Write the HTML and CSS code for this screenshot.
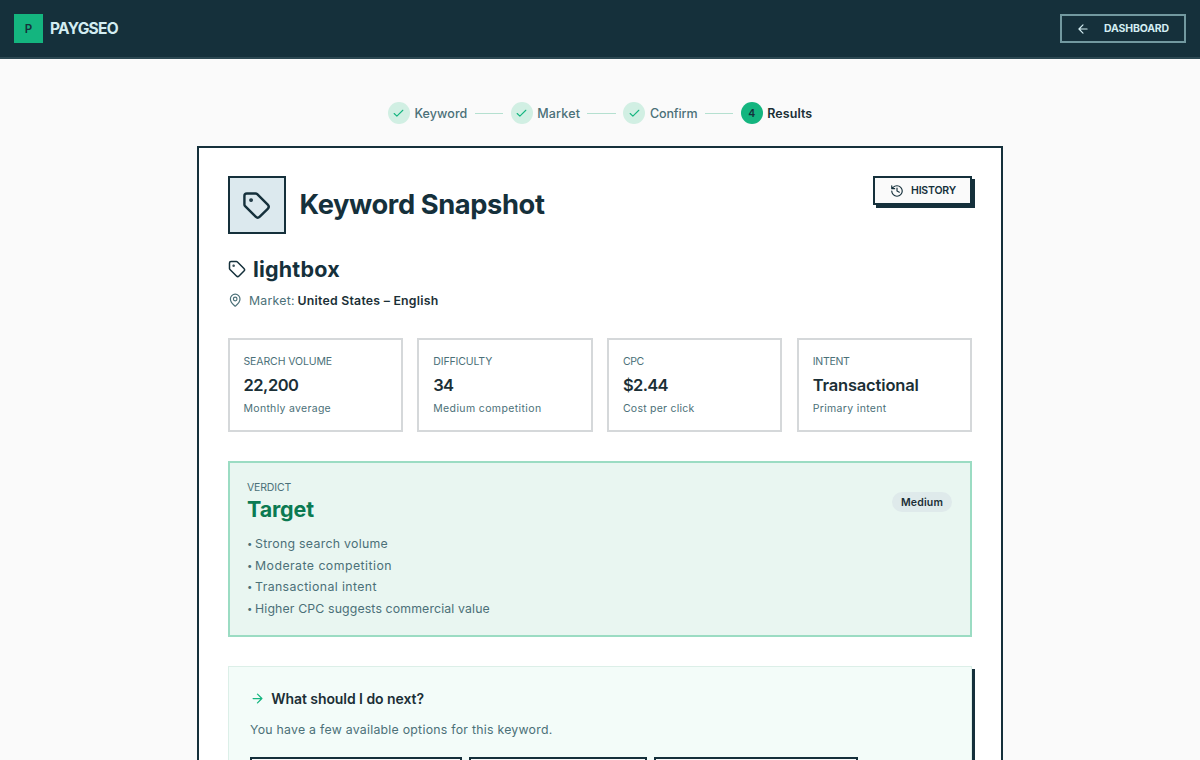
FILE: index.html
```html
<!DOCTYPE html>
<html lang="en">
<head>
<meta charset="utf-8">
<title>Keyword Snapshot</title>
<link rel="stylesheet" href="styles.css">
</head>
<body>
<header class="topbar">
  <div class="brand"><span class="brand-mark">P</span><span class="brand-name">PAYGSEO</span></div>
  <a class="dash-btn"><svg class="ic-arrow" viewBox="0 0 24 24"><path d="m12 19-7-7 7-7M19 12H5"/></svg><span class="dash-label">DASHBOARD</span></a>
</header>
<main class="page">
  <nav class="steps">
    <span class="dot"><svg viewBox="0 0 24 24"><path d="M20 6 9 17l-5-5"/></svg></span><span class="step s1">Keyword</span><i class="line"></i>
    <span class="dot"><svg viewBox="0 0 24 24"><path d="M20 6 9 17l-5-5"/></svg></span><span class="step s2">Market</span><i class="line"></i>
    <span class="dot"><svg viewBox="0 0 24 24"><path d="M20 6 9 17l-5-5"/></svg></span><span class="step s3">Confirm</span><i class="line"></i>
    <span class="dot on">4</span><span class="step s4 active">Results</span>
  </nav>
  <section class="card">
    <div class="card-head">
      <div class="title-row">
        <div class="tag-box"><svg viewBox="0 0 24 24"><path d="M12.586 2.586A2 2 0 0 0 11.172 2H4a2 2 0 0 0-2 2v7.172a2 2 0 0 0 .586 1.414l8.704 8.704a2.426 2.426 0 0 0 3.42 0l6.58-6.58a2.426 2.426 0 0 0 0-3.42z"/><circle class="fill" cx="7.5" cy="7.5" r=".6"/></svg></div>
        <h1 class="title">Keyword Snapshot</h1>
      </div>
      <a class="history"><svg viewBox="0 0 24 24"><path d="M3 12a9 9 0 1 0 9-9 9.75 9.75 0 0 0-6.74 2.74L3 8M3 3v5h5M12 7v5l4 2"/></svg><span class="history-label">HISTORY</span></a>
    </div>
    <div class="keyword"><svg viewBox="0 0 24 24"><path d="M12.586 2.586A2 2 0 0 0 11.172 2H4a2 2 0 0 0-2 2v7.172a2 2 0 0 0 .586 1.414l8.704 8.704a2.426 2.426 0 0 0 3.42 0l6.58-6.58a2.426 2.426 0 0 0 0-3.42z"/><circle class="fill" cx="7.5" cy="7.5" r=".6"/></svg><h2 class="kw">lightbox</h2></div>
    <div class="market"><svg viewBox="0 0 24 24"><path d="M20 10c0 4.993-5.539 10.193-7.399 11.799a1 1 0 0 1-1.202 0C9.539 20.193 4 14.993 4 10a8 8 0 0 1 16 0"/><circle cx="12" cy="10" r="3"/></svg><span class="mk">Market:</span><b class="mkv">United States – English</b></div>
    <div class="stats">
      <div class="stat"><span class="lab l1">SEARCH VOLUME</span><strong class="val v1">22,200</strong><span class="sub u1">Monthly average</span></div>
      <div class="stat"><span class="lab l1">DIFFICULTY</span><strong class="val v2">34</strong><span class="sub u2">Medium competition</span></div>
      <div class="stat"><span class="lab l3">CPC</span><strong class="val v3">$2.44</strong><span class="sub u3">Cost per click</span></div>
      <div class="stat"><span class="lab l4">INTENT</span><strong class="val v4">Transactional</strong><span class="sub u4">Primary intent</span></div>
    </div>
    <div class="verdict">
      <div class="verdict-main">
        <span class="lab l5">VERDICT</span>
        <strong class="target">Target</strong>
        <ul class="reasons">
          <li><span class="bullet">•</span><span class="r1">Strong search volume</span></li>
          <li><span class="bullet">•</span><span class="r2">Moderate competition</span></li>
          <li><span class="bullet">•</span><span class="r3">Transactional intent</span></li>
          <li><span class="bullet">•</span><span class="r4">Higher CPC suggests commercial value</span></li>
        </ul>
      </div>
      <span class="badge">Medium</span>
    </div>
    <div class="next">
      <div class="next-head"><svg viewBox="0 0 24 24"><path d="M5 12h14M12 5l7 7-7 7"/></svg><h3 class="nh">What should I do next?</h3></div>
      <p class="np">You have a few available options for this keyword.</p>
      <div class="actions"><a class="action a1"></a><a class="action a2"></a><a class="action a3"></a></div>
    </div>
  </section>
</main>
</body>
</html>
```
FILE: styles.css
```css
* { box-sizing: border-box; }
body { margin: 0; height: 760px; overflow: hidden; background: #fafafa; color: #15303b; font-family: Inter, "Liberation Sans", sans-serif; }
h1, h2, h3, p, ul { margin: 0; padding: 0; }
svg { flex: none; fill: none; stroke: currentColor; stroke-width: 2; stroke-linecap: round; stroke-linejoin: round; }
span, b, strong, h1, h2, h3 { white-space: nowrap; }
.fill { fill: currentColor; }

/* Top bar */
.topbar { height: 59px; padding: 0 14px; display: flex; align-items: center; justify-content: space-between; background: #15303b; border-bottom: 2px solid #2c4852; }
.brand { display: flex; align-items: center; gap: 7px; }
.brand-mark { width: 29px; height: 29px; display: grid; place-items: center; background: #14b57f; font-size: 11.5px; font-weight: 600; }
.brand-name { color: #d3edf2; font-size: 15.5px; line-height: 20px; font-weight: 700; letter-spacing: -.7px; }
.dash-btn { width: 126px; height: 29px; border: 2px solid #7299a0; display: flex; align-items: center; padding-left: 14px; color: #d3edf2; }
.ic-arrow { width: 14px; height: 14px; margin-right: 14px; }
.dash-label { font-size: 10.5px; font-weight: 700; letter-spacing: -.163px; }

/* Progress steps */
.page { width: 806px; height: 701px; overflow: hidden; margin: 0 auto; padding-top: 43px; }
.steps { display: flex; align-items: center; height: 22px; padding-left: 190.8px; }
.dot { flex: none; width: 22px; height: 22px; border-radius: 50%; display: grid; place-items: center; background: #d1efe3; color: #14b57f; font-size: 10.5px; font-weight: 600; }
.dot svg { width: 13px; height: 13px; }
.dot.on { background: #14b57f; color: #15303b; }
.step { margin-left: 4.6px; font-size: 12.5px; font-weight: 500; color: #4b7078; }
.step.active { color: #1b2f36; font-weight: 600; }
.s1 { letter-spacing: .08px; }
.s2 { letter-spacing: .193px; }
.s3 { letter-spacing: -.109px; }
.s4 { letter-spacing: .08px; }
.line { width: 28.6px; height: 1px; margin: 0 7.3px; background: #b5e0d0; }

/* Result card */
.card { margin-top: 22px; height: 614px; padding: 28px 29px 0 28.5px; background: #fff; border: 2px solid #15303b; border-bottom: 0; }
.card-head { display: flex; justify-content: space-between; align-items: flex-start; }
.title-row { display: flex; align-items: center; gap: 14px; }
.tag-box { width: 58px; height: 58px; display: grid; place-items: center; background: #dce9ee; border: 2px solid #15303b; }
.tag-box svg { width: 29px; height: 29px; }
.title { font-size: 27.3px; line-height: 36px; font-weight: 700; letter-spacing: -.4px; }
.history { width: 99px; height: 29px; display: flex; align-items: center; gap: 7px; padding-left: 15px; background: #fafafa; border: 2px solid #15303b; box-shadow: 3px 3px 0 #15303b; }
.history svg { width: 14px; height: 14px; }
.history-label { font-size: 10.5px; font-weight: 600; letter-spacing: -.185px; }
.keyword { display: flex; align-items: center; gap: 7.4px; height: 28px; margin-top: 21px; }
.keyword svg { width: 18px; height: 18px; }
.kw { font-size: 21.5px; line-height: 28px; font-weight: 700; letter-spacing: .209px; }
.market { display: flex; align-items: center; height: 20px; margin-top: 7px; font-size: 12.3px; color: #4b7078; }
.market svg { width: 14.4px; height: 14.4px; margin-right: 7px; }
.mk { letter-spacing: .279px; }
.mkv { margin-left: 2.6px; font-weight: 600; color: #1b2f36; letter-spacing: .239px; }

/* Metric tiles */
.stats { display: grid; grid-template-columns: repeat(4, 1fr); gap: 14.4px; margin-top: 28px; }
.stat { height: 94px; padding: 13px 14px; border: 2px solid #d5d8da; display: flex; flex-direction: column; align-items: flex-start; }
.lab { font-size: 10.5px; line-height: 18px; color: #4b7078; }
.val { font-size: 16.5px; line-height: 29px; font-weight: 600; color: #1b2f36; }
.sub { font-size: 10.5px; line-height: 18px; color: #4b7078; }
.l1 { letter-spacing: -.113px; }
.l3 { letter-spacing: -.349px; }
.l4 { letter-spacing: -.253px; }
.l5 { letter-spacing: -.167px; }
.v1 { letter-spacing: -.479px; }
.v2 { letter-spacing: -.6px; }
.v3 { letter-spacing: -.653px; }
.v4 { letter-spacing: -.166px; }
.u1 { letter-spacing: .3px; }
.u2 { letter-spacing: .38px; }
.u3 { letter-spacing: .24px; }
.u4 { letter-spacing: .337px; }

/* Verdict */
.verdict { height: 176px; margin-top: 29px; padding: 16px 18px 0 17.5px; display: flex; justify-content: space-between; background: #e9f6f1; border: 2px solid #9bdcc3; }
.verdict-main { display: flex; flex-direction: column; align-items: flex-start; }
.target { font-size: 21.5px; line-height: 26px; margin-top: -1px; font-weight: 700; color: #0b7a52; letter-spacing: -.128px; }
.reasons { margin-top: 11px; list-style: none; font-size: 12.3px; line-height: 21.6px; color: #4b7078; }
.reasons li { display: flex; }
.bullet { width: 8px; font-size: 9.5px; }
.r1 { letter-spacing: .3px; }
.r2 { letter-spacing: .46px; }
.r3 { letter-spacing: .39px; }
.r4 { letter-spacing: .14px; }
.badge { height: 20px; width: 60px; margin-top: 13px; display: grid; place-items: center; border-radius: 10px; background: #dfeaeb; color: #1b2f36; font-size: 10.5px; font-weight: 600; letter-spacing: .154px; }

/* Next steps */
.next { height: 300px; margin-top: 29px; padding: 20px 21px 0 21.5px; background: #f3fcf9; border: 1px solid #dcefe8; box-shadow: 3px 3px 0 #15303b; }
.next-head { display: flex; align-items: center; height: 22px; gap: 6.2px; }
.next-head svg { width: 15px; height: 15px; color: #14b57f; }
.nh { font-size: 14px; font-weight: 600; color: #1b2f36; letter-spacing: -.06px; }
.np { margin-top: 11px; font-size: 12.3px; line-height: 20px; color: #4b7078; letter-spacing: .256px; }
.actions { display: flex; gap: 7px; margin-top: 17px; }
.action { height: 32px; background: #fafafa; border: 2px solid #15303b; box-shadow: 3px 3px 0 #15303b; }
.a1 { width: 212px; }
.a2 { width: 178px; }
.a3 { width: 204px; }
```
